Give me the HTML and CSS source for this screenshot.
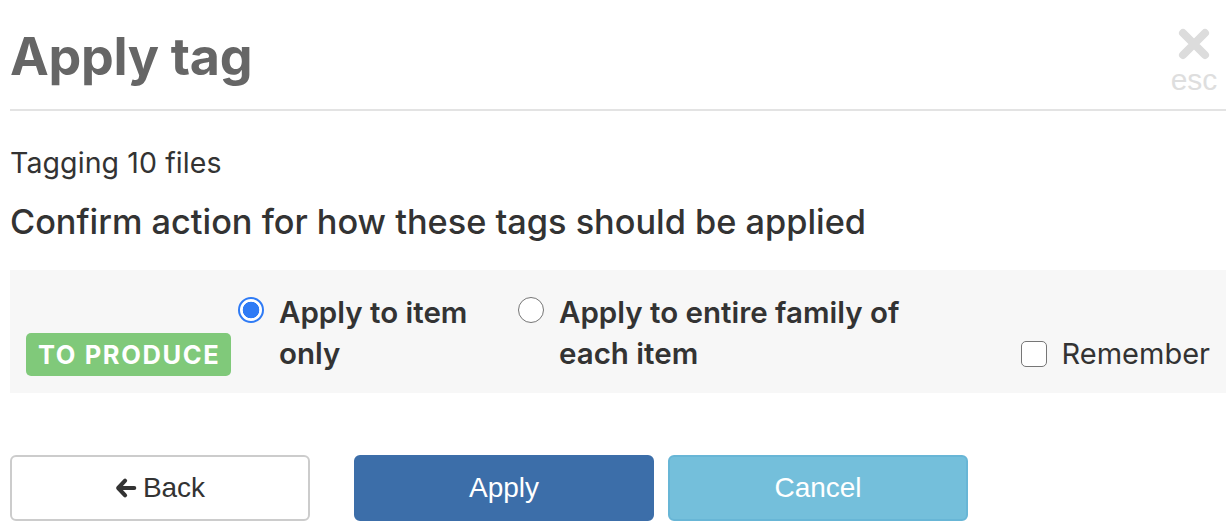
FILE: index.html
```html
<!DOCTYPE html>
<html>
<head>
<meta charset="utf-8">
<link rel="stylesheet" href="styles.css">
</head>
<body>
<div class="modal">
  <div class="header">
    <h1 class="title">Apply tag</h1>
    <div class="close">
      <svg class="close-x" viewBox="0 0 32 32" width="32" height="32"><path d="M5 5 L27 27 M27 5 L5 27" stroke="#dcdcdc" stroke-width="8" stroke-linecap="round"/></svg>
      <span class="esc">esc</span>
    </div>
  </div>
  <p class="count">Tagging 10 files</p>
  <p class="question">Confirm action for how these tags should be applied</p>
  <div class="panel">
    <div class="cell badge-cell"><span class="badge">TO PRODUCE</span></div>
    <div class="cell opt opt1">
      <span class="radio checked"></span>
      <span class="opt-label">Apply to item only</span>
    </div>
    <div class="cell opt opt2">
      <span class="radio"></span>
      <span class="opt-label">Apply to entire family of each item</span>
    </div>
    <div class="cell remember">
      <span class="checkbox"></span>
      <span class="rem-label">Remember</span>
    </div>
  </div>
  <div class="actions">
    <button class="btn btn-back"><svg class="arrow" viewBox="0 0 24 24" width="22" height="22"><path d="M11 4 L3.5 12 L11 20 M4.5 12 H21" stroke="#333" stroke-width="4.5" stroke-linecap="round" stroke-linejoin="round" fill="none"/></svg>Back</button>
    <button class="btn btn-apply">Apply</button>
    <button class="btn btn-cancel">Cancel</button>
  </div>
</div>
</body>
</html>
```
FILE: styles.css
```css
* { box-sizing: border-box; }
html, body { margin: 0; padding: 0; background: #fff; }
body { font-family: Inter, "Noto Sans", sans-serif; color: #333; }
.modal { padding: 0 6px 0 10px; }
.header {
  display: flex;
  justify-content: space-between;
  align-items: flex-start;
  border-bottom: 2px solid #e3e3e3;
  height: 111px;
}
.title {
  margin: 22px 0 0 0;
  font-size: 52px;
  font-weight: 700;
  color: #666;
  line-height: 70px;
  letter-spacing: -0.3px;
}
.close {
  display: flex;
  flex-direction: column;
  align-items: center;
  padding-top: 28px;
  width: 60px;
  margin-right: 2px;
}
.close-x { display: block; }
.esc {
  font-family: "Liberation Sans", Arial, sans-serif;
  font-size: 30px;
  color: #dedede;
  line-height: 30px;
  margin-top: 5px;
}
.count {
  margin: 35px 0 0 0;
  font-size: 28.5px;
  line-height: 34px;
  letter-spacing: 0.1px;
}
.question {
  margin: 21px 0 0 0;
  font-size: 34.3px;
  font-weight: 500;
  line-height: 42px;
}
.panel {
  margin-top: 27px;
  background: #f7f7f7;
  height: 123px;
  display: grid;
  grid-template-columns: 212px 280px 390px 1fr;
  align-items: end;
  padding: 0 16px 17px 16px;
}
.badge {
  display: inline-block;
  background: #80c97a;
  color: #fff;
  font-weight: 700;
  font-size: 25.5px;
  line-height: 43px;
  padding: 0 11px 0 12px;
  border-radius: 5px;
  letter-spacing: 1.6px;
}
.opt { display: flex; align-items: flex-start; margin-bottom: 2px; }
.radio {
  flex: none;
  width: 26px;
  height: 26px;
  border-radius: 50%;
  border: 1.5px solid #767676;
  background: #fff;
  margin-top: 5px;
  margin-right: 15px;
}
.radio.checked {
  border: 2.5px solid #2f7bf5;
  background: radial-gradient(circle, #2f7bf5 0 8px, #fff 8.6px);
}
.opt-label {
  font-size: 29.5px;
  font-weight: 600;
  line-height: 41px;
}
.opt1 .opt-label { width: 215px; }
.opt2 .opt-label { width: 355px; }
.remember {
  display: flex;
  justify-content: flex-end;
  align-items: center;
  height: 41px;
  margin-bottom: 2px;
}
.checkbox {
  width: 26px;
  height: 26px;
  border: 1.5px solid #767676;
  border-radius: 5px;
  background: #fff;
  margin-right: 15px;
}
.rem-label { font-size: 29px; line-height: 41px; }
.actions {
  display: flex;
  margin-top: 62px;
}
.btn {
  width: 300px;
  height: 66px;
  border-radius: 6px;
  font-family: "Liberation Sans", Arial, sans-serif;
  font-size: 28px;
  display: flex;
  align-items: center;
  justify-content: center;
  padding: 0;
  cursor: pointer;
}
.btn-back { background: #fff; border: 2px solid #ccc; color: #333; }
.arrow { margin-right: 6px; }
.btn-apply { background: #3c6ea9; border: 2px solid #3c6ea9; color: #fff; margin-left: 44px; }
.btn-cancel { background: #74bfdb; border: 2px solid #68b6d6; color: #fff; margin-left: 14px; }
```
